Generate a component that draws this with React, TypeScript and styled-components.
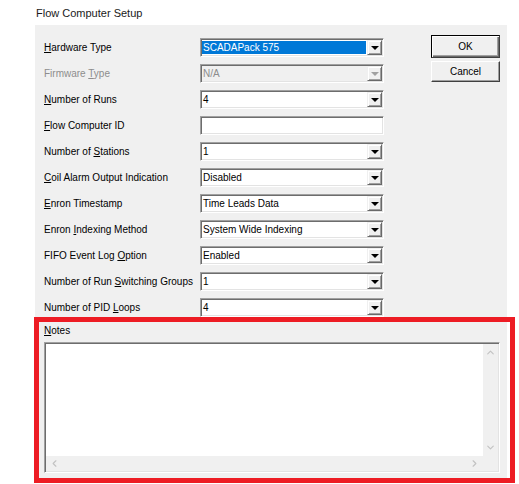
import { Fragment } from 'react';
import styled, { createGlobalStyle } from 'styled-components';
import { ChevronUp, ChevronDown, ChevronLeft, ChevronRight } from 'lucide-react';

const GlobalStyle = createGlobalStyle`
  body {
    margin: 0;
    background: #ffffff;
    font-family: "Liberation Sans", Arial, sans-serif;
  }
`;

type Field = {
  label: string;
  key: number;
  value?: string;
  kind: 'combo' | 'text';
  disabled?: boolean;
  selected?: boolean;
};

const FIELDS: Field[] = [
  { label: 'Hardware Type', key: 0, value: 'SCADAPack 575', kind: 'combo', selected: true },
  { label: 'Firmware Type', key: 9, value: 'N/A', kind: 'combo', disabled: true },
  { label: 'Number of Runs', key: 0, value: '4', kind: 'combo' },
  { label: 'Flow Computer ID', key: 0, kind: 'text' },
  { label: 'Number of Stations', key: 10, value: '1', kind: 'combo' },
  { label: 'Coil Alarm Output Indication', key: 0, value: 'Disabled', kind: 'combo' },
  { label: 'Enron Timestamp', key: 0, value: 'Time Leads Data', kind: 'combo' },
  { label: 'Enron Indexing Method', key: 6, value: 'System Wide Indexing', kind: 'combo' },
  { label: 'FIFO Event Log Option', key: 15, value: 'Enabled', kind: 'combo' },
  { label: 'Number of Run Switching Groups', key: 14, value: '1', kind: 'combo' },
  { label: 'Number of PID Loops', key: 14, value: '4', kind: 'combo' },
];

const Page = styled.div`
  position: relative;
  width: 519px;
  height: 484px;
  box-sizing: border-box;
  padding: 6px 0 0 35px;
`;

const Title = styled.div`
  height: 19px;
  line-height: 14px;
  margin-left: 1px;
  font-size: 11px;
  color: #1a1a1a;
`;

const Dialog = styled.div`
  width: 472px;
  height: 456px;
  box-sizing: border-box;
  padding: 10px 7px 0 9px;
  background: #f0f0f0;
  display: flex;
  flex-direction: column;
`;

const Top = styled.div`
  display: flex;
  justify-content: space-between;
  align-items: flex-start;
`;

const Form = styled.div`
  display: grid;
  grid-template-columns: 156px 184px;
  grid-auto-rows: 19px;
  row-gap: 7px;
  padding-top: 3px;
`;

const Label = styled.div<{ $disabled?: boolean }>`
  font-size: 10px;
  line-height: 20px;
  white-space: nowrap;
  color: ${p => (p.$disabled ? '#8d8d8d' : '#000000')};
`;

const Key = styled.span`
  text-decoration: underline;
  text-underline-offset: 1px;
`;

const Sunken = styled.div<{ $disabled?: boolean }>`
  box-sizing: border-box;
  height: 19px;
  border-top: 1px solid #a0a0a0;
  border-left: 1px solid #a0a0a0;
  border-right: 1px solid #ffffff;
  border-bottom: 1px solid #ffffff;
  box-shadow: inset 1px 1px 0 #6d6d6d, inset -1px -1px 0 #e3e3e3;
  background: ${p => (p.$disabled ? '#f0f0f0' : '#ffffff')};
  display: flex;
  align-items: stretch;
  padding: 1px;
`;

const Value = styled.div<{ $selected?: boolean; $disabled?: boolean }>`
  flex: 1;
  margin: 1px 1px 1px 0;
  padding-left: 1px;
  font-size: 10px;
  line-height: 13px;
  white-space: nowrap;
  background: ${p => (p.$selected ? '#0078d7' : 'transparent')};
  color: ${p => (p.$selected ? '#ffffff' : p.$disabled ? '#8d8d8d' : '#000000')};
`;

const DropButton = styled.div<{ $disabled?: boolean }>`
  width: 15px;
  box-sizing: border-box;
  background: #f0f0f0;
  border-top: 1px solid #f0f0f0;
  border-left: 1px solid #f0f0f0;
  border-right: 1px solid #696969;
  border-bottom: 1px solid #696969;
  box-shadow: inset 1px 1px 0 #ffffff, inset -1px -1px 0 #a0a0a0;
  display: flex;
  align-items: center;
  justify-content: center;

  &::after {
    content: '';
    width: 0;
    height: 0;
    margin-top: 1px;
    border-left: 4px solid transparent;
    border-right: 4px solid transparent;
    border-top: 4px solid ${p => (p.$disabled ? '#a0a0a0' : '#000000')};
  }
`;

const Buttons = styled.div`
  display: flex;
  flex-direction: column;
  gap: 3px;
`;

const Button = styled.button<{ $default?: boolean }>`
  width: 69px;
  height: ${p => (p.$default ? '23px' : '21px')};
  box-sizing: border-box;
  padding: 0;
  font-family: "Liberation Sans", Arial, sans-serif;
  font-size: 10px;
  color: #000000;
  background: #f0f0f0;
  border: 1px solid ${p => (p.$default ? '#000000' : '#f0f0f0')};
  border-top-color: ${p => (p.$default ? '#000000' : '#ffffff')};
  border-left-color: ${p => (p.$default ? '#000000' : '#ffffff')};
  border-right-color: #404040;
  border-bottom-color: #404040;
  box-shadow: ${p =>
    p.$default
      ? 'inset 1px 1px 0 #ffffff, inset -1px -1px 0 #696969, inset -2px -2px 0 #a0a0a0'
      : 'inset -1px -1px 0 #a0a0a0'};
`;

const NotesLabel = styled.div`
  margin-top: 7px;
  height: 14px;
  line-height: 14px;
  font-size: 10px;
  color: #000000;
`;

const NotesBox = styled.div`
  margin-top: 4px;
  width: 456px;
  height: 131px;
  box-sizing: border-box;
  border-top: 1px solid #a0a0a0;
  border-left: 1px solid #a0a0a0;
  border-right: 1px solid #ffffff;
  border-bottom: 1px solid #ffffff;
  box-shadow: inset 1px 1px 0 #6d6d6d, inset -1px -1px 0 #e3e3e3;
  padding: 1px;
  display: grid;
  grid-template-columns: 1fr 15px;
  grid-template-rows: 1fr 15px;
`;

const NotesArea = styled.div`
  background: #ffffff;
`;

const ScrollBar = styled.div<{ $vertical?: boolean }>`
  background: #f0f0f0;
  display: flex;
  flex-direction: ${p => (p.$vertical ? 'column' : 'row')};
  justify-content: space-between;
  align-items: center;
  padding: ${p => (p.$vertical ? '3px 0' : '0 3px')};
  color: #c2c2c2;
`;

const Corner = styled.div`
  background: #f0f0f0;
`;

const Highlight = styled.div`
  position: absolute;
  left: 34px;
  top: 317px;
  width: 481px;
  height: 166px;
  box-sizing: border-box;
  border: 5px solid #ed1c24;
  pointer-events: none;
`;

function withKey(text: string, index: number) {
  return (
    <>
      {text.slice(0, index)}
      <Key>{text[index]}</Key>
      {text.slice(index + 1)}
    </>
  );
}

export default function App() {
  return (
    <>
      <GlobalStyle />
      <Page>
        <Title>Flow Computer Setup</Title>
        <Dialog>
          <Top>
            <Form>
              {FIELDS.map(f => (
                <Fragment key={f.label}>
                  <Label $disabled={f.disabled}>{withKey(f.label, f.key)}</Label>
                  <Sunken $disabled={f.disabled}>
                    <Value $selected={f.selected} $disabled={f.disabled}>
                      {f.value}
                    </Value>
                    {f.kind === 'combo' && <DropButton $disabled={f.disabled} />}
                  </Sunken>
                </Fragment>
              ))}
            </Form>
            <Buttons>
              <Button $default>OK</Button>
              <Button>Cancel</Button>
            </Buttons>
          </Top>
          <NotesLabel>{withKey('Notes', 0)}</NotesLabel>
          <NotesBox>
            <NotesArea />
            <ScrollBar $vertical>
              <ChevronUp size={11} strokeWidth={2.5} />
              <ChevronDown size={11} strokeWidth={2.5} />
            </ScrollBar>
            <ScrollBar>
              <ChevronLeft size={11} strokeWidth={2.5} />
              <ChevronRight size={11} strokeWidth={2.5} />
            </ScrollBar>
            <Corner />
          </NotesBox>
        </Dialog>
        <Highlight />
      </Page>
    </>
  );
}
